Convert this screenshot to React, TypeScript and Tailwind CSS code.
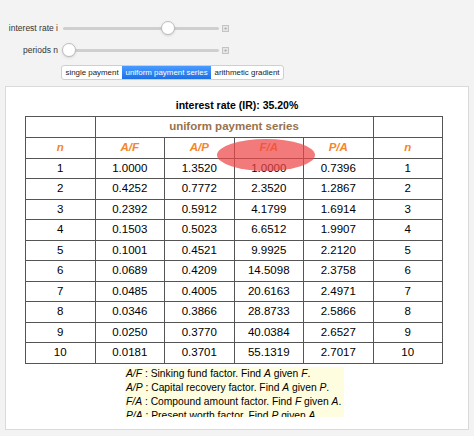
import React from 'react';

const rows = [
  [1, '1.0000', '1.3520', '1.0000', '0.7396'],
  [2, '0.4252', '0.7772', '2.3520', '1.2867'],
  [3, '0.2392', '0.5912', '4.1799', '1.6914'],
  [4, '0.1503', '0.5023', '6.6512', '1.9907'],
  [5, '0.1001', '0.4521', '9.9925', '2.2120'],
  [6, '0.0689', '0.4209', '14.5098', '2.3758'],
  [7, '0.0485', '0.4005', '20.6163', '2.4971'],
  [8, '0.0346', '0.3866', '28.8733', '2.5866'],
  [9, '0.0250', '0.3770', '40.0384', '2.6527'],
  [10, '0.0181', '0.3701', '55.1319', '2.7017'],
];

const legend = [
  ['A/F', 'Sinking fund factor. Find ', 'A', 'F'],
  ['A/P', 'Capital recovery factor. Find ', 'A', 'P'],
  ['F/A', 'Compound amount factor. Find ', 'F', 'A'],
  ['P/A', 'Present worth factor. Find ', 'P', 'A'],
];

function Slider({ label, pos }: { label: string; pos: number }) {
  return (
    <div className="flex h-[22px] items-center">
      <span className="w-[58px] pr-[5px] text-right text-[8.5px] text-[#333]">{label}</span>
      <div className="relative h-[14px] w-[156px]">
        <div className="absolute left-0 right-0 top-[6px] h-[3px] rounded-full bg-[#cfcfcf]" />
        <div
          className="absolute top-0 h-[14px] w-[14px] rounded-full border border-[#bdbdbd] bg-white shadow-sm"
          style={{ left: pos - 7 }}
        />
      </div>
      <span className="ml-[3px] flex h-[7px] w-[7px] items-center justify-center border border-[#c4c4c4] bg-[#e6e6e6] text-[6px] leading-none text-[#999]">
        +
      </span>
    </div>
  );
}

export default function App() {
  const cell = 'border border-[#555] text-center';
  return (
    <div
      className="h-[436px] w-[474px] overflow-hidden bg-[#f3f3f3] pt-[17px]"
      style={{ fontFamily: '"Liberation Sans", Arial, sans-serif' }}
    >
      <div className="pl-[5px]">
        <Slider label="interest rate i" pos={105} />
        <Slider label="periods n" pos={6} />
      </div>

      <div className="ml-[61px] mt-[4px] flex h-[15px] w-fit overflow-hidden rounded-[3px] border border-[#cfcfcf] bg-white text-[7.9px] leading-[13px] text-[#222]">
        <span className="px-[3.5px]">single payment</span>
        <span className="bg-gradient-to-b from-[#4a9bff] to-[#1c6fe6] px-[3.5px] text-white">uniform payment series</span>
        <span className="px-[3.5px]">arithmetic gradient</span>
      </div>

      <div className="ml-[5px] mt-[6px] h-[344px] w-[464px] border border-[#dadada] bg-white">
        <div className="pt-[12px] text-center text-[10.5px] font-bold leading-[12px] text-black">
          interest rate (IR): 35.20%
        </div>
        <div className="relative ml-[19px] mt-[5px] w-[418px]">
          <table className="w-full table-fixed border-collapse border-[1.5px] border-[#555] text-[11.5px] text-black">
            <tbody>
              <tr className="h-[21px]">
                <td className={cell} />
                <td colSpan={4} className={`${cell} text-[11.5px] font-bold text-[#98724d]`}>
                  uniform payment series
                </td>
                <td className={cell} />
              </tr>
              <tr className="h-[20.5px]">
                {['n', 'A/F', 'A/P', 'F/A', 'P/A', 'n'].map((h, i) => (
                  <td key={i} className={`${cell} font-bold italic text-[#f5852a]`}>
                    {h}
                  </td>
                ))}
              </tr>
              {rows.map((r) => (
                <tr key={r[0]} className="h-[20.5px]">
                  {[...r, r[0]].map((v, i) => (
                    <td key={i} className={cell}>
                      {v}
                    </td>
                  ))}
                </tr>
              ))}
            </tbody>
          </table>
          <div className="pointer-events-none absolute left-[192px] top-[23px] h-[32px] w-[98px] rounded-[50%] bg-[rgba(238,70,70,0.72)]" />
        </div>
        <div className="ml-[119px] mt-[3px] h-[50px] w-[219px] overflow-hidden bg-[#fffde0] pl-[1px] text-[10.3px] leading-[14px] text-black">
          {legend.map(([k, desc, a, b]) => (
            <div key={k} className="whitespace-nowrap">
              <i>{k}</i> : {desc}
              <i>{a}</i> given <i>{b}</i>.
            </div>
          ))}
        </div>
      </div>
    </div>
  );
}
